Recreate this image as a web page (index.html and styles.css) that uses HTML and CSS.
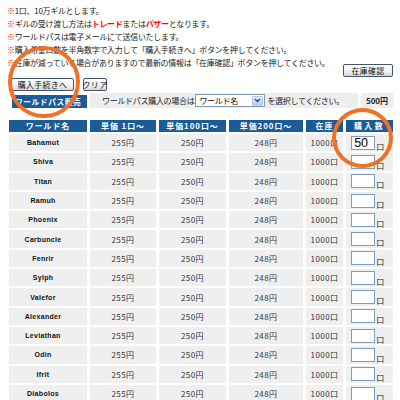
FILE: index.html
```html
<!DOCTYPE html>
<html lang="ja">
<head>
<meta charset="utf-8">
<title>ワールドパス販売</title>
<link rel="stylesheet" href="styles.css">
</head>
<body>
<div class="page">
  <div class="notes">
    <p><span class="mark">※</span>1口、10万ギルとします。</p>
    <p><span class="mark">※</span>ギルの受け渡し方法は<b class="hl">トレード</b>または<b class="hl">バザー</b>となります。</p>
    <p><span class="mark">※</span>ワールドパスは電子メールにて送信いたします。</p>
    <p><span class="mark">※</span>購入希望口数を半角数字で入力して「購入手続きへ」ボタンを押してください。</p>
    <p><span class="mark">※</span>在庫が減っている場合がありますので最新の情報は「在庫確認」ボタンを押してください。</p>
  </div>
  <div class="stock-row"><button class="btn btn-stock">在庫確認</button></div>
  <div class="action-row">
    <button class="btn btn-buy">購入手続きへ</button>
    <button class="btn btn-clear">クリア</button>
  </div>
  <div class="pass-row">
    <div class="pass-label">ワールドパス販売</div>
    <div class="pass-info">ワールドパス購入の場合は<span class="select"><span class="select-text">ワールド名</span><span class="select-arrow"><svg width="7" height="5" viewBox="0 0 7 5"><path d="M1 1 L3.5 3.5 L6 1" fill="none" stroke="#2c4a86" stroke-width="1.4"/></svg></span></span>を選択してください。</div>
    <div class="pass-price">500円</div>
  </div>
  <table class="prices">
    <colgroup>
      <col class="c-name"><col class="c-p1"><col class="c-p2"><col class="c-p3"><col class="c-stock"><col class="c-qty">
    </colgroup>
    <thead>
      <tr><th>ワールド名</th><th>単価 1口～</th><th>単価100口～</th><th>単価200口～</th><th>在庫</th><th class="th-qty">購入数</th></tr>
    </thead>
    <tbody>
      <tr><td class="name">Bahamut</td><td class="num">255円</td><td class="num">250円</td><td class="num">248円</td><td class="num">1000口</td><td class="qty"><span class="qbox"><input class="qin" type="text" value="50"><span class="unit">口</span></span></td></tr>
      <tr><td class="name">Shiva</td><td class="num">255円</td><td class="num">250円</td><td class="num">248円</td><td class="num">1000口</td><td class="qty"><span class="qbox"><input class="qin" type="text"><span class="unit">口</span></span></td></tr>
      <tr><td class="name">Titan</td><td class="num">255円</td><td class="num">250円</td><td class="num">248円</td><td class="num">1000口</td><td class="qty"><span class="qbox"><input class="qin" type="text"><span class="unit">口</span></span></td></tr>
      <tr><td class="name">Ramuh</td><td class="num">255円</td><td class="num">250円</td><td class="num">248円</td><td class="num">1000口</td><td class="qty"><span class="qbox"><input class="qin" type="text"><span class="unit">口</span></span></td></tr>
      <tr><td class="name">Phoenix</td><td class="num">255円</td><td class="num">250円</td><td class="num">248円</td><td class="num">1000口</td><td class="qty"><span class="qbox"><input class="qin" type="text"><span class="unit">口</span></span></td></tr>
      <tr><td class="name">Carbuncle</td><td class="num">255円</td><td class="num">250円</td><td class="num">248円</td><td class="num">1000口</td><td class="qty"><span class="qbox"><input class="qin" type="text"><span class="unit">口</span></span></td></tr>
      <tr><td class="name">Fenrir</td><td class="num">255円</td><td class="num">250円</td><td class="num">248円</td><td class="num">1000口</td><td class="qty"><span class="qbox"><input class="qin" type="text"><span class="unit">口</span></span></td></tr>
      <tr><td class="name">Sylph</td><td class="num">255円</td><td class="num">250円</td><td class="num">248円</td><td class="num">1000口</td><td class="qty"><span class="qbox"><input class="qin" type="text"><span class="unit">口</span></span></td></tr>
      <tr><td class="name">Valefor</td><td class="num">255円</td><td class="num">250円</td><td class="num">248円</td><td class="num">1000口</td><td class="qty"><span class="qbox"><input class="qin" type="text"><span class="unit">口</span></span></td></tr>
      <tr><td class="name">Alexander</td><td class="num">255円</td><td class="num">250円</td><td class="num">248円</td><td class="num">1000口</td><td class="qty"><span class="qbox"><input class="qin" type="text"><span class="unit">口</span></span></td></tr>
      <tr><td class="name">Leviathan</td><td class="num">255円</td><td class="num">250円</td><td class="num">248円</td><td class="num">1000口</td><td class="qty"><span class="qbox"><input class="qin" type="text"><span class="unit">口</span></span></td></tr>
      <tr><td class="name">Odin</td><td class="num">255円</td><td class="num">250円</td><td class="num">248円</td><td class="num">1000口</td><td class="qty"><span class="qbox"><input class="qin" type="text"><span class="unit">口</span></span></td></tr>
      <tr><td class="name">Ifrit</td><td class="num">255円</td><td class="num">250円</td><td class="num">248円</td><td class="num">1000口</td><td class="qty"><span class="qbox"><input class="qin" type="text"><span class="unit">口</span></span></td></tr>
      <tr><td class="name">Diabolos</td><td class="num">255円</td><td class="num">250円</td><td class="num">248円</td><td class="num">1000口</td><td class="qty"><span class="qbox"><input class="qin" type="text"><span class="unit">口</span></span></td></tr>
    </tbody>
  </table>
  <div class="ring ring-a"></div>
  <div class="ring ring-b"></div>
</div>
</body>
</html>
```
FILE: styles.css
```css
* { box-sizing: border-box; }
html, body { margin: 0; padding: 0; background: #fff; }
body {
  font-family: "Noto Sans CJK JP", "Noto Sans", sans-serif;
  font-size: 8px;
  letter-spacing: -0.3px;
  color: #222;
}
.page { position: relative; width: 400px; height: 400px; overflow: hidden; }

.notes { padding: 3.5px 0 0 7px; line-height: 13px; }
.notes p { margin: 0; white-space: nowrap; }
.mark { color: #f00; }
.hl { color: #f00; font-weight: bold; }

.btn {
  font: inherit;
  font-size: 7.9px;
  letter-spacing: 0.4px;
  height: 13px;
  padding: 0;
  margin: 0;
  border: 1px solid #3f5670;
  border-radius: 2px;
  background: linear-gradient(#ffffff, #f1f0ec 55%, #d9d8d1);
  color: #111;
  display: flex;
  align-items: center;
  justify-content: center;
  white-space: nowrap;
}
.stock-row { display: flex; justify-content: flex-end; padding-right: 7px; margin-top: -4.5px; }
.btn-stock { width: 50px; }
.action-row { display: flex; gap: 9px; padding-left: 11px; margin-top: 1px; }
.btn-buy { width: 63px; }
.btn-clear { width: 24px; }

.pass-row {
  display: flex;
  align-items: flex-end;
  gap: 3px;
  margin: 2px 0 0 12px;
  width: 381px;
  height: 15px;
}
.pass-label {
  width: 75px;
  height: 13px;
  background: #1b5c98;
  color: #fff;
  font-weight: bold;
  font-size: 7.7px;
  letter-spacing: 0.6px;
  display: flex;
  align-items: center;
  padding-left: 3px;
  white-space: nowrap;
  overflow: hidden;
}
.pass-info {
  flex: 1;
  height: 15px;
  background: #eeeeee;
  display: flex;
  align-items: center;
  padding-left: 12px;
  white-space: nowrap;
}
.pass-price {
  width: 32px;
  height: 15px;
  background: #eeeeee;
  font-weight: bold;
  display: flex;
  align-items: center;
  justify-content: center;
  letter-spacing: 0;
}
.select {
  display: inline-flex;
  align-items: center;
  justify-content: space-between;
  width: 70px;
  height: 13px;
  margin: 0 2px 0 1px;
  background: #fff;
  border: 1px solid #7f9db9;
  padding: 0 1px 0 3px;
}
.select-text { color: #111; }
.select-arrow {
  width: 11px;
  height: 10px;
  background: linear-gradient(#e3ebfd, #b9cbf5);
  border: 1px solid #b3c6ee;
  border-radius: 1px;
  display: flex;
  align-items: center;
  justify-content: center;
}

.prices {
  margin: 10px 0 0 6px;
  border-collapse: separate;
  border-spacing: 3px 2px;
  table-layout: fixed;
  width: 390px;
}
.c-name { width: 78px; }
.c-p1 { width: 66px; }
.c-p2 { width: 67px; }
.c-p3 { width: 74px; }
.c-stock { width: 37px; }
.c-qty { width: 47px; }
.prices th {
  background: #1b5c98;
  color: #fff;
  font-weight: bold;
  font-size: 7.9px;
  letter-spacing: 1px;
  height: 12px;
  padding: 0;
  line-height: 12px;
  white-space: nowrap;
  overflow: hidden;
}
.prices th.th-qty { letter-spacing: 2.5px; }
.prices td {
  background: #efefef;
  height: 17.3px;
  padding: 0;
  text-align: center;
  vertical-align: middle;
  white-space: nowrap;
}
.prices td.name {
  font-family: "Liberation Sans", Arial, sans-serif;
  font-weight: bold;
  font-size: 7px;
  letter-spacing: 0.3px;
  color: #111;
  padding-right: 10px;
}
.prices td.num { letter-spacing: 0.4px; color: #333; }
.prices td.qty { line-height: 0; }
.qbox {
  display: inline-flex;
  align-items: flex-end;
  gap: 1px;
  vertical-align: middle;
  padding-right: 4px;
}
.qin {
  display: block;
  width: 24px;
  height: 14px;
  border: 1px solid #7f9db9;
  background: #fff;
  padding: 0 0 0 2px;
  margin: 0;
  font-family: "Liberation Sans", Arial, sans-serif;
  font-size: 12.5px;
  line-height: 12px;
  color: #000;
  letter-spacing: 0;
}
.unit { display: block; font-size: 8px; line-height: 9px; color: #222; margin-bottom: -1px; }

.ring {
  position: absolute;
  border: 4.5px solid #ef7125;
  border-radius: 50%;
  pointer-events: none;
}
.ring-a { left: 8px; top: 46px; width: 72px; height: 72px; }
.ring-b { left: 332px; top: 108px; width: 61px; height: 60px; }
```
